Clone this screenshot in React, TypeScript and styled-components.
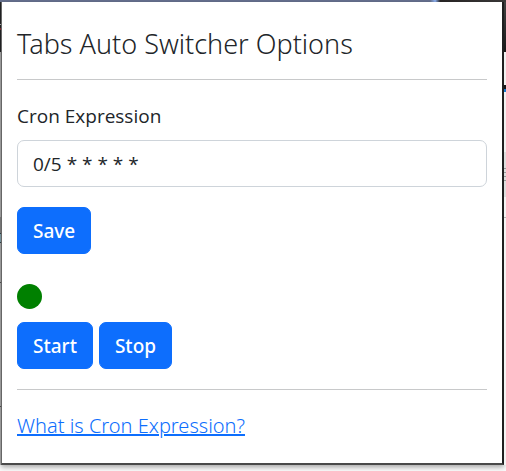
import { useState } from "react";
import styled, { createGlobalStyle } from "styled-components";

const GlobalStyle = createGlobalStyle`
  *, *::before, *::after { box-sizing: border-box; }
  body {
    margin: 0;
    background: #fafafa;
    color: #212529;
    font-family: "Open Sans", "Noto Sans", sans-serif;
    font-size: 19px;
    line-height: 30px;
  }
`;

const Desktop = styled.div`
  min-height: 100vh;
  display: grid;
  grid-template-columns: 1px minmax(0, 1fr) 2px;
  grid-template-rows: 2px auto 1fr;
`;

const TopStrip = styled.div`
  grid-column: 1 / -1;
  background: linear-gradient(to right, #66718f 85%, #8fb4f5 86%, #292626 87%, #3c3a3a);
`;

const LeftStrip = styled.div`
  background: linear-gradient(
    #252627 0 22px, #b9b9b9 22px 23px, #252627 23px 26px, #8b3038 26px 28px,
    #252627 28px 50px, #b4b4b4 50px 215px, #8a8a8a 215px 231px, #34474d 231px 232px,
    #8aabb5 232px 240px, #34474d 240px 241px, #b4b4b4 241px 280px, #555 280px 281px,
    #b4b4b4 281px 404px, #555 404px 405px, #b4b4b4 405px
  );
`;

const RightStrip = styled.div`
  background: linear-gradient(
    #424242, #181818 50px, #f1f1f1 50px 83px, #171717 83px 87px, #1679cf 87px 90px,
    #f1f1f1 90px 150px, #dedede 150px 166px, #999 166px 167px, #dedede 167px 170px,
    #999 170px 171px, #dedede 171px 174px, #999 174px 175px, #dedede 175px 178px,
    #999 178px 179px, #dedede 179px 195px, #f4f4f4 195px 215px, #b5b5b5 215px 216px,
    #f4f4f4 216px
  );
`;

const Popup = styled.main`
  padding: 23px 15px 22px;
  background: #fff;
  border: solid #1f1f1f;
  border-width: 0 2px 2px 1px;
  border-left-color: #666;
  border-bottom-color: #4a4a4a;
  box-shadow: 0 2px 5px rgba(0, 0, 0, 0.35);
`;

const Title = styled.h1`
  margin: 0 0 16px;
  font-family: "Noto Sans", "Open Sans", sans-serif;
  font-size: 27px;
  font-weight: 300;
  line-height: 38px;
`;

const Divider = styled.hr`
  margin: 0 0 21px;
  border: 0;
  border-top: 1px solid #c8c9ca;
`;

const Label = styled.label`
  display: block;
  margin-bottom: 9px;
`;

const TextInput = styled.input`
  display: block;
  width: 100%;
  margin-bottom: 20px;
  padding: 8px 15px 7px;
  border: 1px solid #ced4da;
  border-radius: 7px;
  background: #fff;
  color: inherit;
  font: inherit;
  outline: none;
`;

const Button = styled.button`
  padding: 8px 15px 7px;
  border: 1px solid #0d6efd;
  border-radius: 7px;
  background: #0d6efd;
  color: #fff;
  font-family: "Noto Sans", "Open Sans", sans-serif;
  font-size: 19px;
  font-weight: 500;
  line-height: 30px;
  cursor: pointer;
`;

const ButtonRow = styled.div`
  display: flex;
  gap: 6px;
  margin-bottom: 20px;
`;

const StatusLight = styled.div<{ $running: boolean }>`
  width: 25px;
  height: 25px;
  margin: 30px 0 13px;
  border-radius: 50%;
  background: ${({ $running }) => ($running ? "#008000" : "#dc3545")};
`;

const HelpLink = styled.a`
  color: #0d6efd;
  font-family: "Noto Sans", "Open Sans", sans-serif;
  font-size: 20px;
  font-weight: 300;
  text-decoration: underline;
  text-decoration-thickness: 2px;
`;

export default function App() {
  const [expression, setExpression] = useState("0/5 * * * * *");
  const [running, setRunning] = useState(true);

  return (
    <>
      <GlobalStyle />
      <Desktop>
        <TopStrip />
        <LeftStrip />
        <Popup>
          <Title>Tabs Auto Switcher Options</Title>
          <Divider />
          <form onSubmit={(event) => event.preventDefault()}>
            <Label htmlFor="cron">Cron Expression</Label>
            <TextInput
              id="cron"
              type="text"
              value={expression}
              onChange={(event) => setExpression(event.target.value)}
            />
            <Button type="submit">Save</Button>
          </form>
          <StatusLight $running={running} role="status" aria-label={running ? "Running" : "Stopped"} />
          <ButtonRow>
            <Button type="button" onClick={() => setRunning(true)}>Start</Button>
            <Button type="button" onClick={() => setRunning(false)}>Stop</Button>
          </ButtonRow>
          <Divider />
          <HelpLink href="#cron-help">What is Cron Expression?</HelpLink>
        </Popup>
        <RightStrip />
      </Desktop>
    </>
  );
}
